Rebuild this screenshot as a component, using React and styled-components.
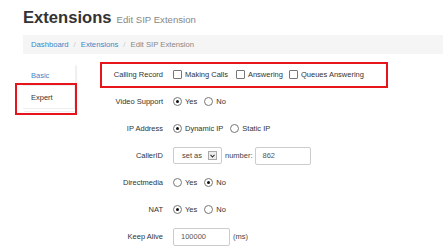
import React from "react";
import styled, { createGlobalStyle } from "styled-components";

const Global = createGlobalStyle`
  html, body { margin: 0; padding: 0; background: #fff; }
  body { font-family: "Liberation Sans", Arial, sans-serif; color: #333; font-size: 7.5px; }
`;

const Page = styled.div`
  width: 443px;
  height: 250px;
  overflow: hidden;
  padding-left: 23px;
  box-sizing: border-box;
`;

const Header = styled.h1`
  margin: 0;
  padding-top: 9px;
  height: 26px;
  box-sizing: border-box;
  display: flex;
  align-items: baseline;
  gap: 5px;
  font-size: 16.6px;
  font-weight: bold;
  color: #333;
  line-height: 17px;
`;

const Sub = styled.small`
  font-size: 9.6px;
  font-weight: normal;
  color: #888;
`;

const Crumbs = styled.ol`
  list-style: none;
  margin: 9px 0 0;
  padding: 0 0 0 8px;
  height: 19px;
  background: #f5f5f5;
  display: flex;
  align-items: center;
  font-size: 7.7px;
`;

const Crumb = styled.li`
  color: ${(p) => (p.$active ? "#888" : "#3a87c8")};
  &:not(:first-child)::before {
    content: "/";
    color: #ccc;
    padding: 0 5px;
  }
`;

const Content = styled.div`
  display: flex;
  margin-top: 7px;
`;

const Sidebar = styled.div`
  width: 77px;
  flex: none;
  padding-top: 4px;
`;

const NavPanel = styled.div`
  width: 52px;
  box-shadow: 1px 1px 1px rgba(0,0,0,0.06);
  border-right: 1px solid #f0f0f0;
  padding-bottom: 2px;
`;

const NavItem = styled.div`
  position: relative;
  height: ${(p) => (p.$active ? "22px" : "20px")};
  display: flex;
  align-items: center;
  padding-left: 8px;
  color: ${(p) => (p.$active ? "#333" : "#3a87c8")};
  border: ${(p) => (p.$active ? "1px solid #eee" : "none")};
  border-left-width: 0;
  background: #fff;
  ${(p) => p.$highlight && `
    &::after {
      content: "";
      position: absolute;
      left: -8px;
      top: -3px;
      right: -3px;
      bottom: -7px;
      border: 2px solid #e8141c;
    }
  `}
`;

const Form = styled.div`
  display: flex;
  flex-direction: column;
`;

const Row = styled.div`
  position: relative;
  display: grid;
  grid-template-columns: 63px auto;
  column-gap: 10px;
  align-items: center;
  height: 27px;
  ${(p) => p.$highlight && `
    &::after {
      content: "";
      position: absolute;
      left: 0;
      top: 1px;
      width: 288px;
      height: 26px;
      box-sizing: border-box;
      border: 2px solid #e8141c;
    }
  `}
`;

const Label = styled.label`
  text-align: right;
  white-space: nowrap;
  color: #333;
`;

const Controls = styled.div`
  display: flex;
  align-items: center;
  white-space: nowrap;
`;

const Option = styled.span`
  display: inline-flex;
  align-items: center;
  gap: 3px;
  margin-right: ${(p) => p.$gap ?? 7}px;
`;

const Box = styled.span`
  width: 7px;
  height: 7px;
  border: 1px solid #777;
  border-radius: 1px;
  background: #fff;
`;

const Radio = styled.span`
  width: 7px;
  height: 7px;
  border: 1px solid #777;
  border-radius: 50%;
  background: #fff;
  display: inline-flex;
  align-items: center;
  justify-content: center;
  &::after {
    content: "";
    width: 3px;
    height: 3px;
    border-radius: 50%;
    background: ${(p) => (p.$checked ? "#111" : "transparent")};
  }
`;

const Select = styled.span`
  width: 49px;
  height: 17px;
  box-sizing: border-box;
  border: 1px solid #ccc;
  border-radius: 2px;
  display: flex;
  align-items: center;
  justify-content: space-between;
  padding: 0 4px 0 8px;
  color: #444;
`;

const Arrow = styled.span`
  width: 9px;
  height: 9px;
  box-sizing: border-box;
  border: 1px solid #aaa;
  background: #eee;
  display: flex;
  align-items: center;
  justify-content: center;
`;

const Input = styled.span`
  width: ${(p) => p.$w}px;
  height: 18px;
  box-sizing: border-box;
  border: 1px solid #ccc;
  border-radius: 2px;
  display: flex;
  align-items: center;
  padding-left: 7px;
  color: #555;
  margin-left: ${(p) => p.$ml || 0}px;
`;

const Text = styled.span`
  margin-left: ${(p) => p.$ml || 0}px;
  color: #444;
`;

export default function App() {
  return (
    <Page>
      <Global />
      <Header>
        Extensions <Sub>Edit SIP Extension</Sub>
      </Header>
      <Crumbs>
        <Crumb>Dashboard</Crumb>
        <Crumb>Extensions</Crumb>
        <Crumb $active>Edit SIP Extension</Crumb>
      </Crumbs>
      <Content>
        <Sidebar>
          <NavPanel>
            <NavItem>Basic</NavItem>
            <NavItem $active $highlight>Expert</NavItem>
          </NavPanel>
        </Sidebar>
        <Form>
          <Row $highlight>
            <Label>Calling Record</Label>
            <Controls>
              <Option $gap={8}><Box />Making Calls</Option>
              <Option $gap={6}><Box />Answering</Option>
              <Option><Box />Queues Answering</Option>
            </Controls>
          </Row>
          <Row>
            <Label>Video Support</Label>
            <Controls>
              <Option><Radio $checked />Yes</Option>
              <Option><Radio />No</Option>
            </Controls>
          </Row>
          <Row>
            <Label>IP Address</Label>
            <Controls>
              <Option><Radio $checked />Dynamic IP</Option>
              <Option><Radio />Static IP</Option>
            </Controls>
          </Row>
          <Row>
            <Label>CallerID</Label>
            <Controls>
              <Select>
                set as
                <Arrow>
                  <svg width="5" height="4" viewBox="0 0 5 4">
                    <path d="M0.5 0.8 L2.5 3 L4.5 0.8" fill="none" stroke="#333" strokeWidth="1.1" />
                  </svg>
                </Arrow>
              </Select>
              <Text $ml={3}>number:</Text>
              <Input $w={56} $ml={2}>862</Input>
            </Controls>
          </Row>
          <Row>
            <Label>Directmedia</Label>
            <Controls>
              <Option><Radio />Yes</Option>
              <Option><Radio $checked />No</Option>
            </Controls>
          </Row>
          <Row>
            <Label>NAT</Label>
            <Controls>
              <Option><Radio $checked />Yes</Option>
              <Option><Radio />No</Option>
            </Controls>
          </Row>
          <Row>
            <Label>Keep Alive</Label>
            <Controls>
              <Input $w={57}>100000</Input>
              <Text $ml={3}>(ms)</Text>
            </Controls>
          </Row>
        </Form>
      </Content>
    </Page>
  );
}
